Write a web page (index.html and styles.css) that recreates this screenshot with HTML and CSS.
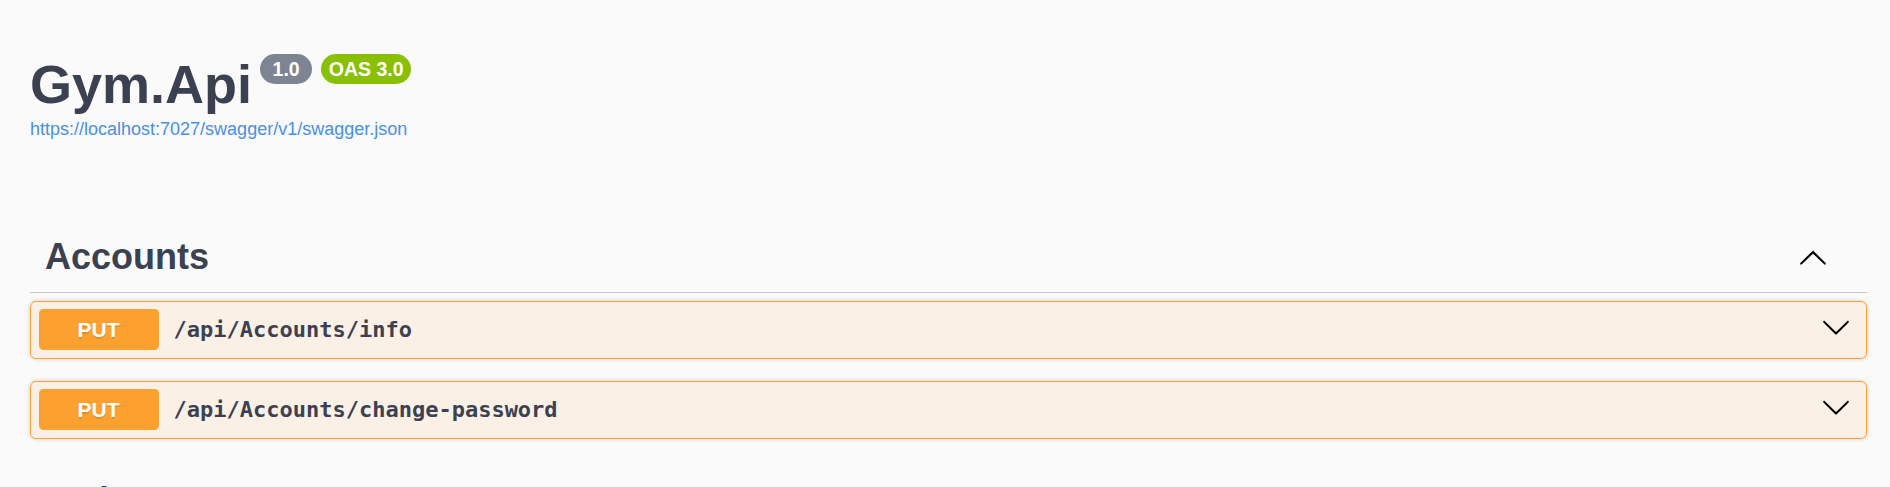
FILE: index.html
```html
<!DOCTYPE html>
<html lang="en">
<head>
<meta charset="utf-8">
<title>Swagger UI</title>
<link rel="stylesheet" href="styles.css">
</head>
<body>
<div class="wrapper">
  <section class="info">
    <h2 class="title">
      <span class="title-text">Gym.Api</span>
      <small class="version">1.0</small>
      <small class="version version-oas">OAS 3.0</small>
    </h2>
    <a class="link" href="#">https://localhost:7027/swagger/v1/swagger.json</a>
  </section>

  <section class="tag-section">
    <h3 class="opblock-tag">
      <span class="tag-name">Accounts</span>
      <span class="tag-spacer"></span>
      <button class="expand-operation" type="button" aria-label="collapse">
        <svg class="arrow" width="30" height="30" viewBox="0 0 20 20"><path d="M17.418 14.908c.272.268.709.268.979 0s.271-.701 0-.969l-7.908-7.83c-.27-.268-.707-.268-.979 0l-7.908 7.830c-.27.268-.27.701 0 .969.271.268.709.268.979 0L10 7.767l7.418 7.141z"/></svg>
      </button>
    </h3>
    <div class="opblock opblock-put">
      <div class="opblock-summary">
        <span class="method">PUT</span>
        <span class="path">/api/Accounts/info</span>
        <svg class="arrow arrow-down" width="30" height="30" viewBox="0 0 20 20"><path d="M17.418 6.109c.272-.268.709-.268.979 0s.271.701 0 .969l-7.908 7.83c-.27.268-.707.268-.979 0l-7.908-7.83c-.27-.268-.27-.701 0-.969.271-.268.709-.268.979 0L10 13.25l7.418-7.141z"/></svg>
      </div>
    </div>
    <div class="opblock opblock-put">
      <div class="opblock-summary">
        <span class="method">PUT</span>
        <span class="path">/api/Accounts/change-password</span>
        <svg class="arrow arrow-down" width="30" height="30" viewBox="0 0 20 20"><path d="M17.418 6.109c.272-.268.709-.268.979 0s.271.701 0 .969l-7.908 7.83c-.27.268-.707.268-.979 0l-7.908-7.83c-.27-.268-.27-.701 0-.969.271-.268.709-.268.979 0L10 13.25l7.418-7.141z"/></svg>
      </div>
    </div>
  </section>

  <section class="tag-section">
    <h3 class="opblock-tag">
      <span class="tag-name">Trainers</span>
      <span class="tag-spacer"></span>
    </h3>
  </section>
</div>
</body>
</html>
```

FILE: styles.css
```css
html, body {
  margin: 0;
  padding: 0;
  background: #fafafa;
}

body {
  font-family: "Liberation Sans", Arial, sans-serif;
  color: #3b4151;
}

.wrapper {
  padding: 0 23px 0 30px;
}

.info {
  padding-top: 53px;
  margin-bottom: 81px;
}

.title {
  display: flex;
  align-items: flex-start;
  margin: 0;
  font-size: 54px;
  line-height: 62px;
  font-weight: 700;
  color: #3b4151;
}

.version {
  margin: 1px 0 0 8px;
  padding: 4px 12.5px;
  border-radius: 57px;
  background: #7d8492;
  color: #fff;
  font-size: 19.5px;
  line-height: 22px;
  font-weight: 700;
}

.version-oas {
  margin-left: 9px;
  padding: 4px 7.6px;
  background: #89bf04;
}

.link {
  display: block;
  margin-top: 4px;
  font-size: 18px;
  line-height: 21px;
  color: #4990e2;
  text-decoration: none;
}

.tag-section {
  display: flex;
  flex-direction: column;
  margin-bottom: 4.5px;
}

.opblock-tag {
  display: flex;
  align-items: center;
  margin: 0 0 7.5px;
  padding: 15px 30px 15px 15px;
  border-bottom: 1.5px solid rgba(59, 65, 81, 0.3);
  font-size: 36px;
  line-height: 41px;
  font-weight: 700;
  color: #3b4151;
}

.tag-spacer {
  flex: 1;
}

.expand-operation {
  display: flex;
  align-items: center;
  margin: 0 9px 0 0;
  padding: 0;
  border: none;
  background: none;
}

.arrow {
  display: block;
  fill: #000;
}

.opblock {
  margin: 0 0 22px;
  border: 1.5px solid #fca130;
  border-radius: 6px;
  background: rgba(252, 161, 48, 0.1);
  box-shadow: 0 0 4.5px rgba(0, 0, 0, 0.19);
}

.opblock-summary {
  display: flex;
  align-items: center;
  padding: 7.5px;
}

.method {
  min-width: 120px;
  padding: 9px 0;
  border-radius: 4.5px;
  background: #fca130;
  color: #fff;
  font-size: 21px;
  line-height: 23px;
  font-weight: 700;
  text-align: center;
  text-shadow: 0 1.5px 0 rgba(0, 0, 0, 0.1);
}

.path {
  flex: 1;
  padding: 0 15px;
  font-family: "DejaVu Sans Mono", "Liberation Mono", monospace;
  font-size: 22px;
  font-weight: 700;
  color: #3b4151;
}

.arrow-down {
  margin: 0 7.5px 6px 0;
}
```
